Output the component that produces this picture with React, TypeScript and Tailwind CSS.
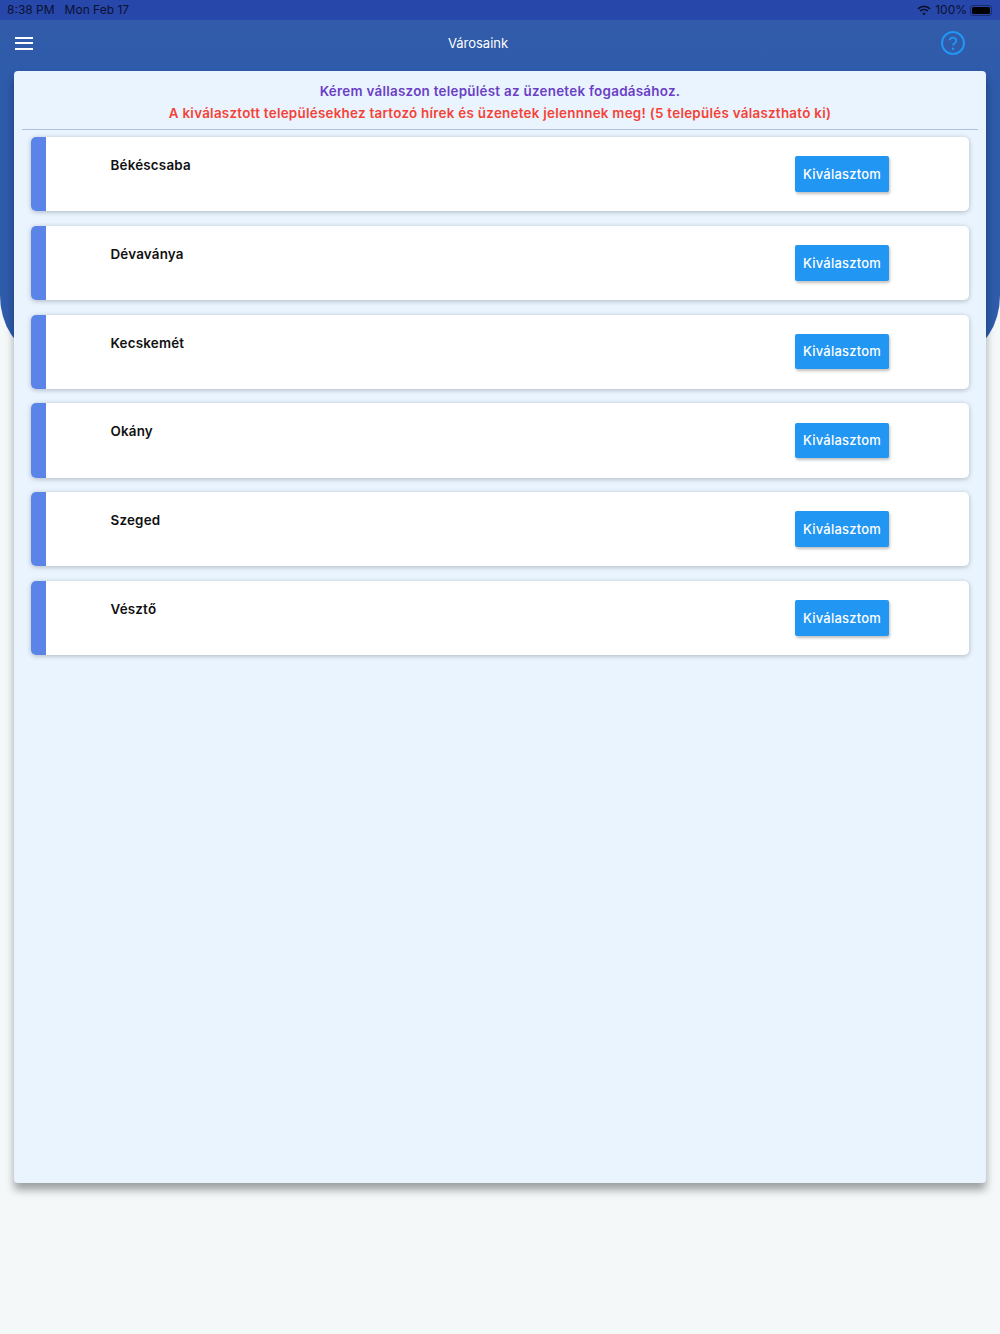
import React from 'react';

const cities = ['Békéscsaba', 'Dévaványa', 'Kecskemét', 'Okány', 'Szeged', 'Vésztő'];

const CityRow: React.FC<{ name: string }> = ({ name }) => (
  <div className="flex h-[74.2px] items-stretch overflow-hidden rounded-[5px] bg-white shadow-[0_1px_5px_rgba(0,0,0,0.25)]">
    <div className="w-[14.5px] shrink-0 bg-[#5b84e8]" />
    <div className="ml-[65px] flex-1 pt-[19px] text-[13.4px] font-semibold leading-[18px] tracking-[0.2px] text-[#111]">{name}</div>
    <div className="mr-[80px] flex items-center">
      <button className="h-[35.5px] w-[94px] rounded-[2px] bg-[#2196f3] pt-[1px] text-[13px] font-medium tracking-[0.2px] text-white shadow-[1px_2px_3px_rgba(0,0,0,0.25)]">
        Kiválasztom
      </button>
    </div>
  </div>
);

export default function App() {
  return (
    <div className="relative h-[1334px] w-[1000px] overflow-hidden bg-[#f4f8f9] font-['Inter',sans-serif]">
      {/* blue backdrop behind the card */}
      <div className="absolute left-0 top-0 h-[350px] w-full rounded-b-[37px_55px] bg-[#2f5bab]" />

      <div className="relative">
        <div className="flex h-[20px] items-center justify-between bg-[#2747ab] pl-[7px] pr-[8px] text-[12px] leading-none text-[#0b1230]">
          <div className="flex gap-[10px]">
            <span>8:38 PM</span>
            <span>Mon Feb 17</span>
          </div>
          <div className="flex items-center gap-[4px]">
            <svg width="14" height="11" viewBox="0 0 14 11" fill="none" stroke="#0b1230" strokeWidth="1.7">
              <path d="M1 3.8C4.4.6 9.6.6 13 3.8" />
              <path d="M3.2 6C5.4 4 8.6 4 10.8 6" />
              <path d="M7 10.5 5.2 8.3C6.2 7.4 7.8 7.4 8.8 8.3Z" fill="#0b1230" stroke="none" />
            </svg>
            <span>100%</span>
            <div className="ml-[-1px] flex h-[11px] w-[22px] rounded-[3px] border border-[#0b1230]/50 p-[1px]">
              <div className="flex-1 rounded-[1.5px] bg-black" />
            </div>
          </div>
        </div>

        <div className="flex h-[46px] items-center justify-between bg-gradient-to-b from-[#325ca9] to-[#2f5bab] pl-[15px] pr-[35px]">
          <div className="flex w-[18px] flex-col gap-[3.5px]">
            <div className="h-[2px] bg-white" />
            <div className="h-[2px] bg-white" />
            <div className="h-[2px] bg-white" />
          </div>
          <span className="ml-[-18px] pt-[1px] text-[13px] text-white">Városaink</span>
          <svg width="24" height="24" viewBox="0 0 24 24" fill="none" stroke="#2196f3" strokeWidth="2">
            <circle cx="12" cy="12" r="11" />
            <path d="M8.6 9.2a3.4 3.4 0 0 1 6.7.6c0 2.2-3.3 2.7-3.3 4.8" strokeWidth="1.9" />
            <circle cx="12" cy="17.8" r="1.2" fill="#2196f3" stroke="none" />
          </svg>
        </div>

        <div className="mx-[14px] mt-[5px] h-[1112px] rounded-[4px] bg-[#e9f4ff] px-[8px] pt-[9px] shadow-[0_7px_9px_rgba(0,0,0,0.35)]">
          <div className="border-b border-[#aebfe8] pb-[5px] text-center text-[13.4px] font-semibold leading-[22px] tracking-[0.27px]">
            <p className="text-[#6b3fc4]">Kérem vállaszon települést az üzenetek fogadásához.</p>
            <p className="text-[#f44336]">A kiválasztott településekhez tartozó hírek és üzenetek jelennnek meg! (5 település választható ki)</p>
          </div>
          <div className="mt-[7px] flex flex-col gap-[14.6px] px-[9px]">
            {cities.map((c) => (
              <CityRow key={c} name={c} />
            ))}
          </div>
        </div>
      </div>
    </div>
  );
}
